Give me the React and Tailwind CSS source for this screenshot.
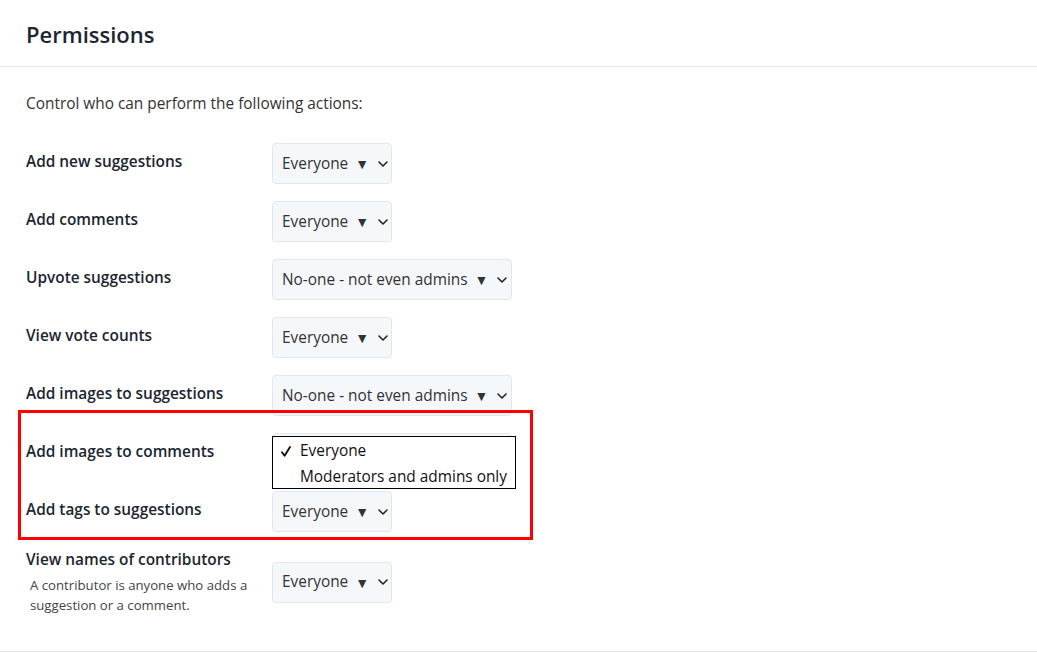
import React from "react";

const Chevron = () => (
  <svg width="10" height="6" viewBox="0 0 10 6" className="ml-[9px]" fill="none">
    <path d="M1 1l4 4 4-4" stroke="#222" strokeWidth="1.6" strokeLinecap="round" strokeLinejoin="round" />
  </svg>
);

const Check = () => (
  <svg width="10" height="11" viewBox="0 0 10 11" fill="none">
    <path d="M1 6.2l2.6 3.6L9 1" stroke="#111" strokeWidth="1.9" strokeLinecap="round" strokeLinejoin="round" />
  </svg>
);

function Select({ value, wide, hidden }) {
  return (
    <div
      className={`flex items-center h-[41px] ${wide ? "w-[240px]" : "w-[120px]"} rounded-[4px] border border-[#e1e7ee] bg-[#f5f8fb] pl-[9px] text-[15.4px] text-[#333] whitespace-nowrap`}
    >
      <span className={hidden ? "invisible" : ""}>{value}</span>
      <span className={`ml-[7px] text-[14px] text-[#333] ${hidden ? "invisible" : ""}`}>▼</span>
      <Chevron />
    </div>
  );
}

const rows = [
  ["Add new suggestions", "Everyone", false],
  ["Add comments", "Everyone", false],
  ["Upvote suggestions", "No-one - not even admins", true],
  ["View vote counts", "Everyone", false],
  ["Add images to suggestions", "No-one - not even admins", true],
  ["Add images to comments", "Everyone", true, true],
  ["Add tags to suggestions", "Everyone", false],
];

export default function App() {
  return (
    <div
      className="relative w-[1037px] h-[653px] bg-white overflow-hidden"
      style={{ fontFamily: '"Open Sans", "Noto Sans", sans-serif' }}
    >
      <div className="h-[67px] flex items-center px-[26px] pt-[1px] border-b border-[#dfe6ee]">
        <h1 className="text-[22px] font-semibold text-[#1b2631] leading-none">Permissions</h1>
      </div>
      <div className="px-[26px] pt-[27px] pb-[36px] border-b border-[#dfe6ee]">
        <p className="text-[15.4px] leading-[20px] text-[#333]">Control who can perform the following actions:</p>
        <div className="mt-[29px] flex flex-col gap-[17px]">
          {rows.map(([label, value, wide, open]) => (
            <div key={label} className="relative flex items-center">
              <div className="w-[246px] pb-[3px] text-[15.4px] leading-[20px] font-semibold text-[#1b2631]">{label}</div>
              <Select value={value} wide={wide} hidden={open} />
              {open && (
                <div className="absolute left-[246px] top-[3px] w-[244px] h-[53px] border border-black bg-white text-[15.4px] text-[#111] pt-[1px] whitespace-nowrap">
                  <div className="flex items-center h-[26px]">
                    <span className="w-[27px] pl-[8px] flex items-center">
                      <Check />
                    </span>
                    <span>Everyone</span>
                  </div>
                  <div className="flex items-center h-[26px] pl-[27px]">Moderators and admins only</div>
                </div>
              )}
            </div>
          ))}
          <div className="flex items-center">
            <div className="w-[246px]">
              <div className="text-[15.4px] leading-[20px] font-semibold text-[#1b2631] pt-[1px]">View names of contributors</div>
              <div className="pl-[4px] pt-[5px] text-[13.2px] leading-[20px] text-[#444]">
                A contributor is anyone who adds a<br />suggestion or a comment.
              </div>
            </div>
            <Select value="Everyone" wide={false} />
          </div>
        </div>
      </div>
      <div className="absolute left-[18px] top-[410px] w-[515px] h-[130px] border-[3px] border-[#ff0000] pointer-events-none" />
    </div>
  );
}
